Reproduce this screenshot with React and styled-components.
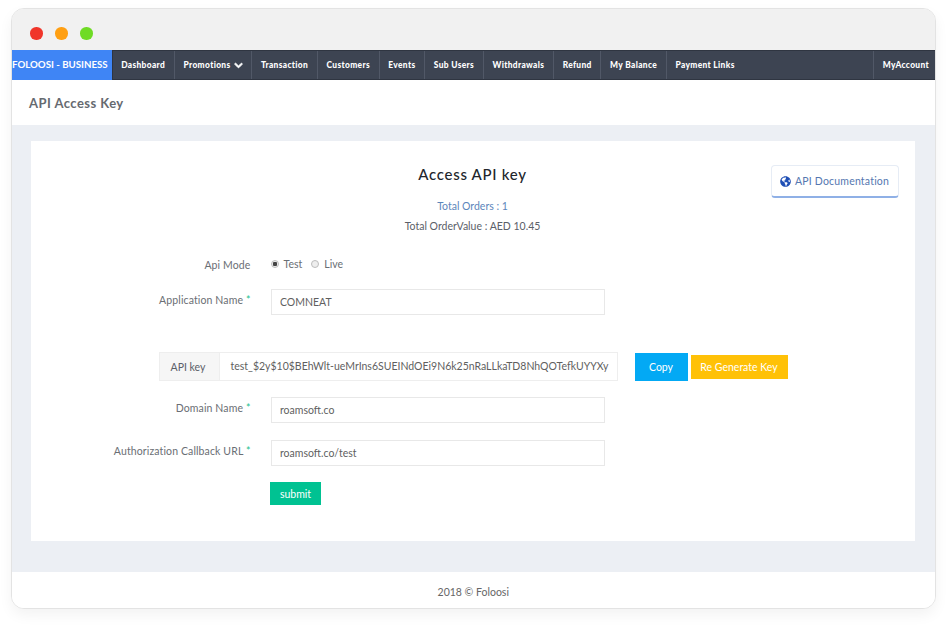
import React from "react";
import styled, { createGlobalStyle } from "styled-components";
import { FaChevronDown, FaGlobeAmericas } from "react-icons/fa";

const GlobalStyle = createGlobalStyle`
  html, body {
    margin: 0;
    padding: 0;
    background: #fff;
  }
  body {
    font-family: "Lato", "Liberation Sans", sans-serif;
    color: #5b6068;
  }
  * {
    box-sizing: border-box;
  }
`;

const navItems = [
  "Dashboard",
  "Promotions",
  "Transaction",
  "Customers",
  "Events",
  "Sub Users",
  "Withdrawals",
  "Refund",
  "My Balance",
  "Payment Links",
];

const App = () => {
  return (
    <Page>
      <GlobalStyle />
      <Browser>
        <TitleBar>
          <Dot color="#f0352a" />
          <Dot color="#ff9f12" />
          <Dot color="#6fdb25" />
        </TitleBar>
        <Nav>
          <Brand>FOLOOSI - BUSINESS</Brand>
          {navItems.map((item) => (
            <NavItem key={item}>
              {item}
              {item === "Promotions" && <FaChevronDown size={9} stroke="currentColor" strokeWidth={50} />}
            </NavItem>
          ))}
          <NavRight>MyAccount</NavRight>
        </Nav>
        <PageHeader>API Access Key</PageHeader>
        <Body>
          <Card>
            <CardTop>
              <span />
              <Title>Access API key</Title>
              <DocButton>
                <FaGlobeAmericas size={11} color="#1f4fb5" />
                API Documentation
              </DocButton>
            </CardTop>
            <Orders>Total Orders : 1</Orders>
            <OrderValue>Total OrderValue : AED 10.45</OrderValue>

            <ModeRow>
              <ModeLabel>Api Mode</ModeLabel>
              <Radios>
                <Radio checked />
                Test
                <Radio />
                Live
              </Radios>
            </ModeRow>
            <Row>
              <Label>
                Application Name <Req>*</Req>
              </Label>
              <Input readOnly value="COMNEAT" />
            </Row>

            <KeyRow>
              <KeyGroup>
                <KeyAddon>API key</KeyAddon>
                <KeyValue>test_$2y$10$BEhWlt-ueMrIns6SUEINdOEi9N6k25nRaLLkaTD8NhQOTefkUYYXy</KeyValue>
              </KeyGroup>
              <CopyButton>Copy</CopyButton>
              <RegenButton>Re Generate Key</RegenButton>
            </KeyRow>

            <Row>
              <Label>
                Domain Name <Req>*</Req>
              </Label>
              <Input readOnly value="roamsoft.co" />
            </Row>
            <Row>
              <Label>
                Authorization Callback URL <Req>*</Req>
              </Label>
              <Input readOnly value="roamsoft.co/test" />
            </Row>
            <SubmitRow>
              <SubmitButton>submit</SubmitButton>
            </SubmitRow>
          </Card>
        </Body>
        <Footer>2018 © Foloosi</Footer>
      </Browser>
    </Page>
  );
};

export default App;

const Page = styled.div`
  width: 950px;
  height: 626px;
  padding: 8px 14px 0 10.5px;
  overflow: hidden;
`;

const Browser = styled.div`
  width: 925.5px;
  height: 601px;
  border: 1.5px solid #e3e3e3;
  border-radius: 13px;
  overflow: hidden;
  background: #fff;
  box-shadow: 0 6px 14px rgba(0, 0, 0, 0.05);
  display: flex;
  flex-direction: column;
`;

const TitleBar = styled.div`
  height: 41px;
  flex: none;
  background: #f1f1f1;
  display: flex;
  align-items: center;
  gap: 12.5px;
  padding: 8px 0 0 18.5px;
`;

const Dot = styled.span`
  width: 12.5px;
  height: 12.5px;
  border-radius: 50%;
  background: ${(p) => p.color};
`;

const Nav = styled.nav`
  height: 30px;
  flex: none;
  display: flex;
  background: #3d4452;
  border-top: 1px solid #2f3541;
  border-bottom: 1px solid #2f3541;
`;

const Brand = styled.div`
  width: 101px;
  margin: -1px 0;
  flex: none;
  background: #3f85f5;
  color: #fff;
  font-size: 9.7px;
  font-weight: 700;
  line-height: 28px;
  white-space: nowrap;
  padding-left: 0.5px;
  border-right: 1px solid #2f3541;
`;

const NavItem = styled.div`
  display: flex;
  align-items: center;
  gap: 3px;
  padding: 0 8.7px;
  color: #fff;
  font-size: 8.4px;
  font-weight: 900;
  letter-spacing: 0.35px;
  white-space: nowrap;
  border-right: 1px solid #515867;

  &:nth-last-child(2) {
    border-right: 0;
  }
`;

const NavRight = styled(NavItem)`
  margin-left: auto;
  padding: 0 6px 0 9px;
  border-right: 0;
  border-left: 1px solid #515867;
`;

const PageHeader = styled.div`
  height: 45px;
  flex: none;
  padding: 0 17.5px;
  display: flex;
  align-items: center;
  background: #fff;
  color: #666a70;
  font-size: 13px;
  font-weight: 700;
  letter-spacing: 0.45px;
`;

const Body = styled.main`
  flex: 1;
  background: #eceff4;
  padding: 16px 20.5px 31px 19px;
`;

const Card = styled.section`
  height: 400px;
  background: #fff;
  padding-top: 24px;
  font-size: 10.5px;
`;

const CardTop = styled.div`
  display: grid;
  grid-template-columns: 1fr auto 1fr;
  align-items: start;
`;

const Title = styled.h2`
  margin: -1px 0 0;
  color: #22262c;
  font-size: 15px;
  font-weight: 500;
  letter-spacing: 0.7px;
  line-height: 20px;
`;

const DocButton = styled.button`
  justify-self: end;
  width: 128px;
  height: 33px;
  margin-right: 16px;
  display: flex;
  align-items: center;
  justify-content: center;
  gap: 4px;
  background: #fff;
  border: 1px solid #e6ecf5;
  border-bottom: 2px solid #8fb0e6;
  border-radius: 4px;
  color: #5577b0;
  font: inherit;
  font-size: 10.5px;
  letter-spacing: 0.2px;
`;

const Orders = styled.div`
  margin-top: 1px;
  text-align: center;
  color: #5c86bb;
  line-height: 14px;
`;

const OrderValue = styled.div`
  margin-top: 6px;
  text-align: center;
  line-height: 14px;
`;

const Row = styled.div`
  display: grid;
  grid-template-columns: 220px 334px;
  column-gap: 20px;
  align-items: center;
  margin-bottom: 17px;
`;

const ModeRow = styled(Row)`
  margin-top: 25px;
  margin-bottom: 19px;
`;

const Label = styled.label`
  text-align: right;
  position: relative;
  top: -2px;
  color: #6a6e74;
  letter-spacing: 0.12px;
`;

const ModeLabel = styled(Label)`
  top: 1px;
`;

const Req = styled.span`
  color: #27c08f;
`;

const Radios = styled.div`
  display: flex;
  align-items: center;
  gap: 5px;
  color: #6a6e74;
`;

const Radio = styled.span`
  width: 8px;
  height: 8px;
  border-radius: 50%;
  border: 1px solid #bdbdbd;
  background: ${(p) => (p.checked ? "radial-gradient(circle, #444 0 2px, #eee 2.5px)" : "#eee")};
  &:not(:first-child) {
    margin-left: 4px;
  }
`;

const Input = styled.input`
  width: 334px;
  height: 26px;
  padding: 0 8.5px;
  border: 1px solid #e8e8e8;
  color: #5f5f5f;
  font: inherit;
  font-size: 10.5px;
  outline: none;
`;

const KeyRow = styled.div`
  display: flex;
  align-items: center;
  margin: 37px 0 16px 128px;
`;

const KeyGroup = styled.div`
  width: 459px;
  height: 29px;
  display: flex;
  border: 1px solid #eeeeee;
  margin-right: 17px;
`;

const KeyAddon = styled.div`
  width: 60px;
  flex: none;
  display: flex;
  align-items: center;
  justify-content: center;
  padding-right: 2px;
  background: #f6f6f6;
  border-right: 1px solid #eeeeee;
`;

const KeyValue = styled.div`
  flex: 1;
  padding-left: 11px;
  line-height: 27px;
  color: #5f5f5f;
  white-space: nowrap;
  overflow: hidden;
`;

const CopyButton = styled.button`
  width: 53px;
  height: 28px;
  background: #03a9f4;
  border: 0;
  color: #fff;
  font: inherit;
`;

const RegenButton = styled.button`
  width: 97px;
  height: 24px;
  margin-left: 3px;
  background: #ffc107;
  border: 0;
  color: #fff;
  font: inherit;
`;

const SubmitRow = styled.div`
  margin-top: -1px;
  padding-left: 239.5px;
`;

const SubmitButton = styled.button`
  width: 51px;
  height: 23px;
  background: #00c292;
  border: 0;
  color: #fff;
  font: inherit;
`;

const Footer = styled.footer`
  height: 36px;
  flex: none;
  display: flex;
  align-items: center;
  justify-content: center;
  background: #fff;
  font-size: 10.5px;
  color: #666;
  padding-top: 4px;
`;
